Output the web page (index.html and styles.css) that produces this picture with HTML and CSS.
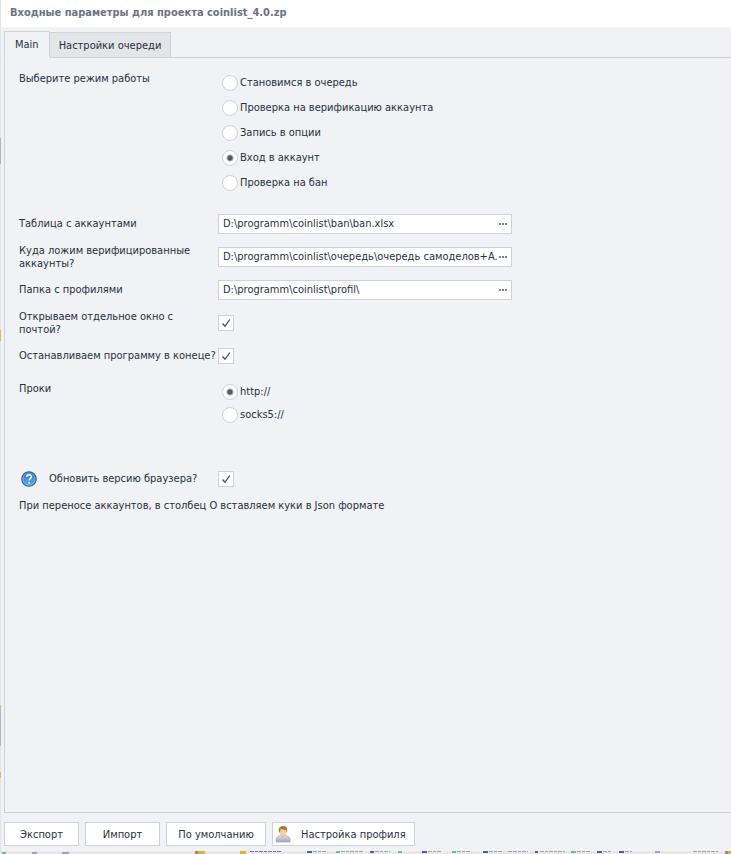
FILE: index.html
```html
<!DOCTYPE html>
<html lang="ru">
<head>
    <meta charset="UTF-8">
    <meta name="viewport" content="width=device-width, initial-scale=1.0">
    <title>Входные параметры для проекта coinlist_4.0.zp</title>
    <link rel="stylesheet" href="styles.css">
</head>
<body>
    <div class="window">
        <header class="title-bar">
            <h1>Входные параметры для проекта coinlist_4.0.zp</h1>
        </header>

        <div class="tabs" role="tablist">
            <button type="button" class="tab active" role="tab" aria-selected="true">Main</button>
            <button type="button" class="tab" role="tab" aria-selected="false">Настройки очереди</button>
        </div>

        <form class="panel" id="params">
            <div class="row row-group" role="radiogroup" aria-labelledby="mode-label">
                <span class="caption" id="mode-label">Выберите режим работы</span>
                <div class="options">
                    <label class="option"><input type="radio" name="mode">Становимся в очередь</label>
                    <label class="option"><input type="radio" name="mode">Проверка на верификацию аккаунта</label>
                    <label class="option"><input type="radio" name="mode">Запись в опции</label>
                    <label class="option"><input type="radio" name="mode" checked>Вход в аккаунт</label>
                    <label class="option"><input type="radio" name="mode">Проверка на бан</label>
                </div>
            </div>

            <div class="row">
                <label class="caption" for="accounts">Таблица с аккаунтами</label>
                <div class="file">
                    <input type="text" id="accounts" value="D:\programm\coinlist\ban\ban.xlsx">
                    <button type="button" class="browse" aria-label="Обзор"><i></i><i></i><i></i></button>
                </div>
            </div>
            <div class="row">
                <label class="caption" for="verified">Куда ложим верифицированные аккаунты?</label>
                <div class="file">
                    <input type="text" id="verified" value="D:\programm\coinlist\очередь\очередь самоделов+A.">
                    <button type="button" class="browse" aria-label="Обзор"><i></i><i></i><i></i></button>
                </div>
            </div>
            <div class="row">
                <label class="caption" for="profiles">Папка с профилями</label>
                <div class="file">
                    <input type="text" id="profiles" value="D:\programm\coinlist\profil\">
                    <button type="button" class="browse" aria-label="Обзор"><i></i><i></i><i></i></button>
                </div>
            </div>
            <div class="row">
                <label class="caption" for="mail">Открываем отдельное окно с почтой?</label>
                <input type="checkbox" id="mail" checked>
            </div>
            <div class="row">
                <label class="caption" for="stop">Останавливаем программу в конеце?</label>
                <input type="checkbox" id="stop" checked>
            </div>

            <div class="row row-group row-proxy" role="radiogroup" aria-labelledby="proxy-label">
                <span class="caption" id="proxy-label">Проки</span>
                <div class="options">
                    <label class="option"><input type="radio" name="proxy" checked>http://</label>
                    <label class="option"><input type="radio" name="proxy">socks5://</label>
                </div>
            </div>

            <div class="row">
                <div class="caption caption-help">
                    <svg class="help" viewBox="0 0 16 16" aria-hidden="true">
                        <defs>
                            <linearGradient id="blue" x1="0" y1="0" x2="0" y2="1">
                                <stop offset="0" stop-color="#2f74b8"/>
                                <stop offset="1" stop-color="#62b0ee"/>
                            </linearGradient>
                        </defs>
                        <circle cx="8" cy="8" r="7.2" fill="url(#blue)" stroke="#255f9e" stroke-width="1.2"/>
                        <circle cx="8" cy="8" r="6.1" fill="none" stroke="#8fc3ee" stroke-width=".6"/>
                        <path d="M5.7 6.1C5.7 2.9 10.4 3 10.4 5.8c0 1.8-2.3 1.8-2.3 3.7" fill="none" stroke="#fff" stroke-width="1.4"/>
                        <circle cx="8.1" cy="11.8" r=".9" fill="#fff"/>
                    </svg>
                    <label for="browser">Обновить версию браузера?</label>
                </div>
                <input type="checkbox" id="browser" checked>
            </div>

            <p class="note">При переносе аккаунтов, в столбец О вставляем куки в Json формате</p>
        </form>

        <footer class="actions">
            <button type="button" class="btn">Экспорт</button>
            <button type="button" class="btn">Импорт</button>
            <button type="button" class="btn btn-wide">По умолчанию</button>
            <button type="button" class="btn btn-profile">
                <svg class="user" viewBox="0 0 16 18" aria-hidden="true">
                    <defs>
                        <linearGradient id="shirt" x1="0" y1="0" x2="0" y2="1">
                            <stop offset="0" stop-color="#dfe2ec"/>
                            <stop offset="1" stop-color="#9da3bb"/>
                        </linearGradient>
                    </defs>
                    <path d="M1 17v-2.500C1 12 3 11 5.500 10.500h4.500C13 11 15 12 15 14.500V17z" fill="url(#shirt)" stroke="#9a9fb4" stroke-width=".6"/>
                    <path d="M5.500 10.500 7.800 13.200 10.200 10.500V9H5.500z" fill="#e9b77c"/>
                    <ellipse cx="8" cy="6.500" rx="3.500" ry="4.200" fill="#f6cf9b"/>
                    <path d="M4.200 7.500C2.800 3 5 1 8.200 1c3.500 0 4.800 2.500 3.500 6.500L11 5C9 5.200 7.500 4.500 6.500 3.800 5.500 4.500 5 5.500 4.900 7.500z" fill="#a87a38"/>
                </svg>
                <span>Настройка профиля</span>
            </button>
        </footer>
    </div>

    <!-- taskbar peeking out under the window -->
    <svg class="taskbar" viewBox="0 0 731 3" preserveAspectRatio="xMinYMin slice" aria-hidden="true">
        <rect width="731" height="3" fill="#e8e8e9"/>
        <g fill="#9aa5ce">
            <rect x="32" y="1" width="5" height="2"/>
            <rect x="62" y="1" width="7" height="2"/>
            <rect x="655" width="5" height="2"/>
        </g>
        <g fill="#65bda9">
            <rect x="2" y="1" width="4" height="2"/>
            <rect x="336" width="4" height="2"/>
            <rect x="398" width="4" height="2"/>
            <rect x="452" width="4" height="2"/>
            <rect x="508" width="4" height="1"/>
            <rect x="571" width="5" height="2"/>
        </g>
        <g fill="#3f5fc0">
            <rect x="307" width="5" height="2"/>
            <rect x="370" width="4" height="2"/>
            <rect x="422" width="5" height="2"/>
            <rect x="483" width="5" height="2"/>
            <rect x="535" width="3" height="2"/>
            <rect x="597" width="5" height="2"/>
            <rect x="619" width="5" height="2"/>
        </g>
        <path d="M250 .5h32" stroke="#5b78d6" stroke-dasharray="4 1 3 1"/>
        <path d="M313 .5h14M341 .5h22M375 .5h15M428 .5h14M457 .5h14M489 .5h13M513 .5h15M540 .5h25M577 .5h14M603 .5h9M625 .5h7M693 .5h25" stroke="#a2a2aa" stroke-dasharray="4 1 3 1"/>
        <path d="M195 0h3v3h-3zM725 0h3v3h-3z" fill="#8d8d92"/>
        <path d="M198 0h7v3h-7zM240 0h6v3h-6zM728 0h3v3h-3z" fill="#e3b32c"/>
    </svg>
</body>
</html>
```
FILE: styles.css
```css
* {
    box-sizing: border-box;
}

body {
    display: flex;
    flex-direction: column;
    min-height: 100vh;
    margin: 0;
    background-color: #f1f2f6;
    color: #28303a;
    font-family: 'DejaVu Sans Condensed', 'DejaVu Sans', sans-serif;
    font-size: 11px;
    line-height: 13px;
}

button, input {
    margin: 0;
    color: inherit;
    font: inherit;
}

/* the left edge shows what lies behind the window */
.window {
    flex: 1;
    display: flex;
    flex-direction: column;
    border-left: 1px solid #e3e4e7;
    border-image: linear-gradient(#e3e4e7 139px, #b4b5b9 139px, #b4b5b9 165px, #e3e4e7 165px, #e3e4e7 330px, #dcba60 330px, #dcba60 341px, #e3e4e7 341px, #e3e4e7 704px, #dcba60 704px, #b4b5b9 709px, #b4b5b9 745px, #e3e4e7 745px, #e3e4e7 771px, #dcba60 771px, #dcba60 777px, #e3e4e7 777px) 1;
    border-image-width: 0 0 0 1px;
}

.title-bar {
    padding: 6px 9px 8px;
    background-color: #fff;
}

h1 {
    margin: 0;
    color: #6b7384;
    font-size: 11px;
    font-weight: bold;
    line-height: 13px;
}

.tabs {
    display: flex;
    align-items: flex-end;
    padding: 4px 0 0 3px;
    background: linear-gradient(#cfd1d9, #cfd1d9) 3px 100% / 100% 1px no-repeat;
}

.tab {
    height: 26px;
    padding: 0 9px;
    border: 1px solid #cfd1d9;
    border-left: 0;
    background-color: #e4e5e9;
}

.tab.active {
    height: 27px;
    padding: 0 10px;
    border-left: 1px solid #cfd1d9;
    border-bottom-color: #f1f2f6;
    background-color: #f1f2f6;
}

.panel {
    flex: 1;
    margin-left: 3px;
    padding: 12px 14px;
    border-left: 1px solid #cfd1d9;
    border-bottom: 1px solid #cfd1d9;
}

.row {
    display: grid;
    grid-template-columns: 199px minmax(0, 294px);
    align-items: center;
    min-height: 33px;
}

.row-group {
    align-items: start;
    padding-bottom: 12px;
}

.row-group .caption {
    padding-top: 2px;
}

.caption-help {
    display: flex;
    align-items: center;
    gap: 12px;
    padding-left: 2px;
}

.help {
    width: 16px;
    height: 16px;
}

.options {
    padding-left: 4px;
}

.option {
    display: flex;
    align-items: center;
    gap: 2px;
    height: 25px;
}

.row-proxy {
    padding: 8px 0 36px;
}

.row-proxy .option {
    height: 23px;
}

input[type="radio"],
input[type="checkbox"] {
    appearance: none;
    width: 16px;
    height: 16px;
    border: 1px solid #cfd1d9;
    background: #fff center no-repeat;
}

input[type="radio"] {
    border-radius: 50%;
}

input[type="radio"]:checked {
    background-image: radial-gradient(circle, #565a60 2px, #fff 4px);
}

input[type="checkbox"]:checked {
    background-image: url("data:image/svg+xml,%3Csvg xmlns='http://www.w3.org/2000/svg' width='14' height='14'%3E%3Cpath d='M3.500 7.500 6 10.300 10.800 3.500' fill='none' stroke='%23484c54' stroke-width='1.300'/%3E%3C/svg%3E");
}

.file {
    display: flex;
    height: 20px;
    border: 1px solid #cfd1d9;
    background-color: #fff;
}

.file input {
    flex: 1;
    min-width: 0;
    padding: 0 0 0 4px;
    border: 0;
    background: none;
}

.browse {
    display: flex;
    align-items: center;
    gap: 1px;
    width: 12px;
    padding: 0;
    border: 0;
    background: none;
}

.browse i {
    width: 2px;
    height: 2px;
    background-color: #7c7f85;
}

.note {
    margin: 4px 0 0;
}

.actions {
    display: flex;
    gap: 6px;
    padding: 9px 3px 5px;
}

.btn {
    min-width: 75px;
    height: 24px;
    padding: 0 10px;
    border: 1px solid #cfd1d9;
    background-color: #fff;
}

.btn-wide {
    min-width: 100px;
}

.btn-profile {
    display: flex;
    align-items: center;
    gap: 10px;
    min-width: 143px;
    padding: 0 8px 0 2px;
}

.user {
    width: 16px;
    height: 18px;
}

.taskbar {
    width: 100%;
    height: 3px;
}
```
